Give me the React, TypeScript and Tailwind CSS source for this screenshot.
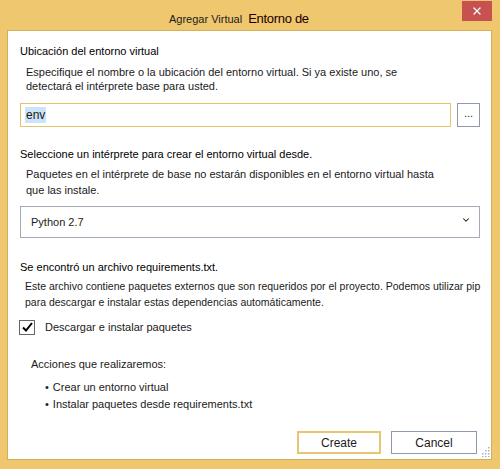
import { ChevronDown, X } from "lucide-react";

const font = { fontFamily: '"Liberation Sans", Arial, sans-serif' };

export default function App() {
	return (
		<div
			className="flex h-[469px] w-[500px] flex-col bg-[#EFC76F] text-[11px] text-[#1a1a1a]"
			style={font}
		>
			{/* Title bar */}
			<div className="flex h-[30px] shrink-0 items-start">
				<div className="ml-[169px] mt-[9px] flex items-baseline gap-[6px]">
					<span className="text-[11px] text-[#222]">Agregar Virtual</span>
					<span className="text-[13px] tracking-[-0.3px] text-[#1a0000]">Entorno de</span>
				</div>
				<button className="ml-auto mr-[8px] mt-px flex h-[20px] w-[30px] items-center justify-center bg-[#C75050] text-white">
					<X size={12} strokeWidth={2.5} />
				</button>
			</div>

			{/* Dialog body */}
			<div className="mx-[7px] flex h-[430px] w-[485px] flex-col border border-[#D3AE5B] bg-white">
				<div className="ml-[12px] mt-[12px] leading-[16px] text-black">Ubicación del entorno virtual</div>
				<div className="ml-[18px] mt-[6px] leading-[14px]">
					Especifique el nombre o la ubicación del entorno virtual. Si ya existe uno, se
					<br />
					detectará el intérprete base para usted.
				</div>
				<div className="ml-[12px] mt-[10px] flex gap-[6px]">
					<div className="flex h-[24px] w-[431px] items-center border border-[#E5C36A] pl-[4px]">
						<span className="bg-[#CCE4F7] px-px text-[12px] leading-[16px] text-[#1a1a1a]">env</span>
					</div>
					<button className="flex h-[24px] w-[23px] items-center justify-center border border-[#8E9AAA] pb-[4px] text-[11px]">
						...
					</button>
				</div>

				<div className="ml-[12px] mt-[19px] leading-[16px] text-black">
					Seleccione un intérprete para crear el entorno virtual desde.
				</div>
				<div className="ml-[18px] mt-[4px] leading-[16px]">
					Paquetes en el intérprete de base no estarán disponibles en el entorno virtual hasta
					<br />
					que las instale.
				</div>
				<div className="ml-[12px] mt-[8px] flex h-[32px] w-[460px] items-center justify-between border border-[#A3ABB9] pl-[10px] pr-[8px]">
					<span>Python 2.7</span>
					<ChevronDown size={10} strokeWidth={2.5} className="mt-[-4px]" />
				</div>

				<div className="ml-[12px] mt-[21px] leading-[16px] text-black">Se encontró un archivo requirements.txt.</div>
				<div className="ml-[17px] mt-[3px] text-[10.5px] leading-[16px]">
					Este archivo contiene paquetes externos que son requeridos por el proyecto. Podemos utilizar pip
					<br />
					para descargar e instalar estas dependencias automáticamente.
				</div>
				<div className="ml-[11px] mt-[9px] flex items-center gap-[10px] leading-[16px]">
					<div className="flex h-[15px] w-[16px] items-center justify-center border border-[#666]">
						<svg width="11" height="10" viewBox="0 0 11 10">
							<path d="M1 5.5 L4 8.5 L10 1" fill="none" stroke="#000" strokeWidth="2" />
						</svg>
					</div>
					<span>Descargar e instalar paquetes</span>
				</div>

				<div className="ml-[23px] mt-[21px] leading-[16px]">Acciones que realizaremos:</div>
				<ul className="ml-[37px] mt-[7px] leading-[17px]">
					<li className="flex gap-[4px]">
						<span>•</span>
						<span>Crear un entorno virtual</span>
					</li>
					<li className="flex gap-[4px]">
						<span>•</span>
						<span>Instalar paquetes desde requirements.txt</span>
					</li>
				</ul>

				<div className="mb-[2px] mr-px mt-auto flex items-end justify-end">
					<button className="mb-[3px] h-[23px] w-[84px] border-2 border-[#E6C66E] text-[12px]">Create</button>
					<button className="mb-[3px] ml-[10px] h-[23px] w-[86px] border border-[#8E9AAA] text-[12px]">Cancel</button>
					<svg width="10" height="10" viewBox="0 0 10 10" className="ml-[3px]">
						{[
							[8, 0], [8, 3], [5, 3], [8, 6], [5, 6], [2, 6], [8, 9], [5, 9], [2, 9],
						].map(([x, y]) => (
							<rect key={`${x}-${y}`} x={x} y={y} width="1.5" height="1.5" fill="#A9B0BC" />
						))}
					</svg>
				</div>
			</div>
		</div>
	);
}
